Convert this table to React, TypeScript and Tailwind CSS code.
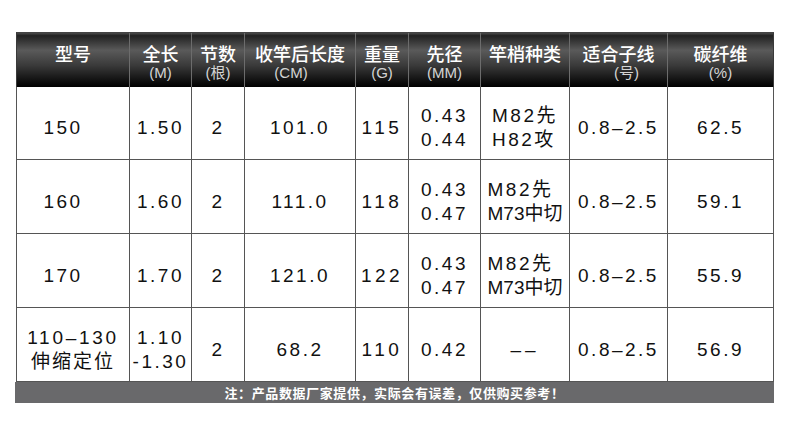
type Line = { text: string; className?: string };
type Cell = { lines: Line[]; className?: string; left?: boolean };

const headers: { title: string; sub?: string; subClass?: string }[] = [
  { title: '型号' },
  { title: '全长', sub: '(M)' },
  { title: '节数', sub: '(根)' },
  { title: '收竿后长度', sub: '(CM)', subClass: 'mr-[18px]' },
  { title: '重量', sub: '(G)' },
  { title: '先径', sub: '(MM)' },
  { title: '竿梢种类' },
  { title: '适合子线', sub: '(号)', subClass: 'ml-[16px]' },
  { title: '碳纤维', sub: '(%)' },
];

const l = (text: string, className?: string): Line => ({ text, className });

const tipA = { lines: [l('M82先'), l('H82攻')], left: true };
const tipB = { lines: [l('M82先'), l('M73中切', 'tracking-normal')], left: true };

const rows: { height: string; cells: Cell[] }[] = [
  {
    height: 'h-[73px]',
    cells: [
      { lines: [l('150')], className: 'pr-5' },
      { lines: [l('1.50')] },
      { lines: [l('2')] },
      { lines: [l('101.0')] },
      { lines: [l('115', 'tracking-[3.5px]')] },
      { lines: [l('0.43'), l('0.44')] },
      tipA,
      { lines: [l('0.8–2.5', 'tracking-[1.5px]')] },
      { lines: [l('62.5', 'tracking-[1.5px]')] },
    ],
  },
  {
    height: 'h-[74px]',
    cells: [
      { lines: [l('160')], className: 'pr-5' },
      { lines: [l('1.60')] },
      { lines: [l('2')] },
      { lines: [l('111.0')] },
      { lines: [l('118', 'tracking-[3.5px]')] },
      { lines: [l('0.43'), l('0.47')] },
      tipB,
      { lines: [l('0.8–2.5', 'tracking-[1.5px]')] },
      { lines: [l('59.1', 'tracking-[1.5px]')] },
    ],
  },
  {
    height: 'h-[74px]',
    cells: [
      { lines: [l('170')], className: 'pr-5' },
      { lines: [l('1.70')] },
      { lines: [l('2')] },
      { lines: [l('121.0')] },
      { lines: [l('122', 'tracking-[3.5px]')] },
      { lines: [l('0.43'), l('0.47')] },
      tipB,
      { lines: [l('0.8–2.5', 'tracking-[1.5px]')] },
      { lines: [l('55.9', 'tracking-[1.5px]')] },
    ],
  },
  {
    height: 'h-[74px]',
    cells: [
      { lines: [l('110–130', 'tracking-[2.7px]'), l('伸缩定位', 'tracking-[2px]')] },
      { lines: [l('1.10'), l('-1.30')] },
      { lines: [l('2')] },
      { lines: [l('68.2')] },
      { lines: [l('110', 'tracking-[3.5px]')] },
      { lines: [l('0.42')] },
      { lines: [l('––', 'tracking-[4px]')] },
      { lines: [l('0.8–2.5', 'tracking-[1.5px]')] },
      { lines: [l('56.9', 'tracking-[1.5px]')] },
    ],
  },
];

const grid = 'grid grid-cols-[113px_62px_53px_111px_53px_72px_89px_98px_106px]';

export default function App() {
  return (
    <div className="w-[790px] h-[436px] bg-white pt-[32px] pl-[16px] font-['Liberation_Sans','Noto_Sans_CJK_SC',sans-serif] text-[#111]">
      <div className="w-[758px]">
        {/* Header */}
        <div
          className={`${grid} h-[55px] border-l border-[#3a3a3a] bg-[linear-gradient(to_bottom,#4a4a4a_0%,#222_5%,#3c3c3c_18%,#5a5a5a_32%,#3a3a3a_60%,#151515_85%,#000_100%)] border-t border-t-[#444]`}
        >
          {headers.map((h) => (
            <div
              key={h.title}
              className="flex flex-col items-center pt-[11px] border-r border-[#6c6c6c] last:border-r-[#3a3a3a]"
            >
              <div className="text-[18px] leading-[18px] font-medium text-white font-['Noto_Sans_CJK_SC',sans-serif]">
                {h.title}
              </div>
              {h.sub && (
                <div className={`mt-[3px] text-[15px] leading-[15px] text-[#d4d4d4] ${h.subClass ?? ''}`}>
                  {h.sub}
                </div>
              )}
            </div>
          ))}
        </div>

        {/* Body */}
        <div className="border-l border-[#555]">
          {rows.map((row, ri) => (
            <div key={ri} className={`${grid} ${row.height}`}>
              {row.cells.map((cell, ci) => (
                <div
                  key={ci}
                  className={`flex items-center justify-center pt-[10px] border-r border-b border-[#555] ${cell.className ?? ''}`}
                >
                  <div className={cell.left ? 'text-left' : 'text-center'}>
                    {cell.lines.map((line, li) => (
                      <div
                        key={li}
                        className={`text-[19px] leading-[24px] whitespace-nowrap tracking-[2.5px] ${line.className ?? ''}`}
                      >
                        {line.text}
                      </div>
                    ))}
                  </div>
                </div>
              ))}
            </div>
          ))}
        </div>

        {/* Footer note */}
        <div className="-ml-px w-[759px] h-[21px] bg-[#69696b] flex items-center justify-center text-white text-[13px] font-bold tracking-[0.6px] font-['Noto_Sans_CJK_SC',sans-serif]">
          注：产品数据厂家提供，实际会有误差，仅供购买参考！
        </div>
      </div>
    </div>
  );
}
